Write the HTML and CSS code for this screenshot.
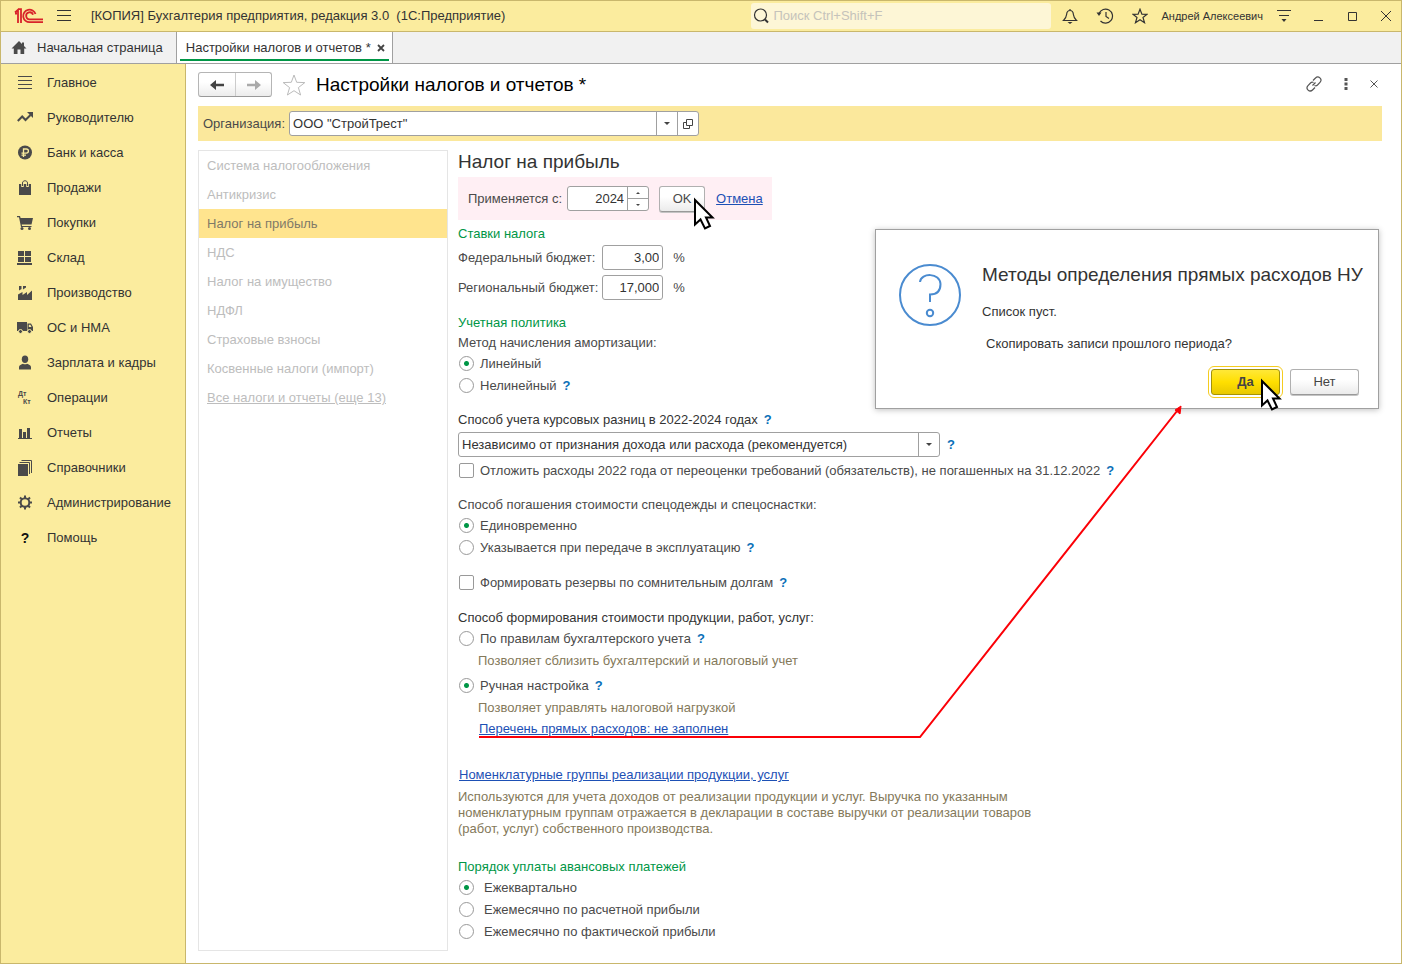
FILE: index.html
```html
<!DOCTYPE html>
<html lang="ru">
<head>
<meta charset="utf-8">
<title>Настройки налогов и отчетов</title>
<link rel="stylesheet" href="styles.css">
</head>
<body>
<div class="window">
  <header class="titlebar">
    <svg class="logo" width="30" height="16" viewBox="0 0 30 16" fill="none" stroke="#d8232a" stroke-width="1.800">
      <path d="M1 4.500 4 1.800V15M7 15V1.200H4.500M1 5.500h2"/>
      <path d="M21.500 6A6.300 6.300 0 1 0 16 14.200H29"/>
      <path d="M19 6.800A3.500 3.500 0 1 0 16 11.300H29"/>
    </svg>
    <button class="icon-btn menu-btn" aria-label="Меню"><svg width="14" height="12" viewBox="0 0 14 12" stroke="#333" fill="none"><path d="M0 .5h14M0 5.500h14M0 10.500h14"/></svg></button>
    <span class="app-title">[КОПИЯ] Бухгалтерия предприятия, редакция 3.0 &nbsp;(1С:Предприятие)</span>
    <label class="search">
      <svg width="16" height="16" viewBox="0 0 16 16" fill="none" stroke="#333"><circle cx="7.500" cy="7" r="6" stroke-width="1.200"/><path d="m12 11.500 3 3" stroke-width="2"/></svg>
      <input type="text" placeholder="Поиск Ctrl+Shift+F" aria-label="Поиск">
    </label>
    <div class="title-tools">
      <button class="icon-btn" aria-label="Уведомления"><svg width="16" height="16" viewBox="0 0 16 16" fill="none" stroke="#333" stroke-width="1.200"><path d="M1.500 12.500h13c-2-2-2.800-3-3.100-6C11.200 3.800 10 2.500 8 2.500S4.800 3.800 4.600 6.500c-.3 3-1.100 4-3.100 6zM8 2.500V1"/><path d="M5.500 14h5L8 16z" fill="#333" stroke="none"/></svg></button>
      <button class="icon-btn" aria-label="История"><svg width="18" height="16" viewBox="0 0 18 16" fill="none" stroke="#333" stroke-width="1.200"><path d="M3 5.500A7 7 0 1 1 4.500 13M10 4v4.500l3 2"/><path d="M.5 4.500h5L3 8z" fill="#333" stroke="none"/></svg></button>
      <button class="icon-btn" aria-label="Избранное"><svg width="16" height="16" viewBox="0 0 16 16" fill="none" stroke="#333" stroke-width="1.200"><path d="m8 1.200 1.900 4.900 5.200.2-4.100 3.200 1.500 5.200L8 11.700l-4.500 3L5 9.500.9 6.300l5.200-.2z"/></svg></button>
      <span class="user">Андрей Алексеевич</span>
      <button class="icon-btn" aria-label="Настройка"><svg width="16" height="14" viewBox="0 0 16 14" fill="none" stroke="#333"><path d="M1 1.500h14M3 6.500h10"/><path d="M5.500 10h5L8 13z" fill="#333" stroke="none"/></svg></button>
      <button class="icon-btn win" aria-label="Свернуть"><svg width="12" height="12" viewBox="0 0 12 12" stroke="#333"><path d="M2 10.500h9"/></svg></button>
      <button class="icon-btn win" aria-label="Развернуть"><svg width="12" height="12" viewBox="0 0 12 12" fill="none" stroke="#333"><path d="M2.500 2.500h8v8h-8z"/></svg></button>
      <button class="icon-btn win" aria-label="Закрыть"><svg width="12" height="12" viewBox="0 0 12 12" stroke="#333"><path d="m1 1 10 10M11 1 1 11"/></svg></button>
    </div>
  </header>

  <nav class="tabs">
    <a class="tab home" href="#"><svg width="16" height="14" viewBox="0 0 16 14" fill="#4a4a4a"><path d="M8 0 .5 7.500h2.300V13h3.700V8.500h3V13h3.700V7.500h2.300L13 5V1.500h-2V3z"/></svg>Начальная страница</a>
    <div class="tab active"><span>Настройки налогов и отчетов *</span><button class="icon-btn" aria-label="Закрыть вкладку"><svg width="8" height="8" viewBox="0 0 8 8" stroke="#444" stroke-width="1.800"><path d="m1 1 6 6M7 1 1 7"/></svg></button></div>
  </nav>

  <div class="workspace">
    <nav class="sidebar">
      <a href="#"><svg viewBox="0 0 16 16" stroke="#4a4a4a"><path d="M1 1.500h14M1 5.500h14M1 9.500h14M1 13.500h14"/></svg>Главное</a>
      <a href="#"><svg viewBox="0 0 16 16" fill="none" stroke="#4a4a4a" stroke-width="2"><path d="m.8 11 4.400-4.500 3.300 3.500L13.500 5"/><path d="M10 2h6v6z" fill="#4a4a4a" stroke="none"/></svg>Руководителю</a>
      <a href="#"><svg viewBox="0 0 16 16"><circle cx="8" cy="7.500" r="7" fill="#4a4a4a"/><path d="M6.500 12V4h2.800a2 2 0 0 1 0 4.200H4.500M4.500 10.200h4.500" fill="none" stroke="#faec9f" stroke-width="1.300"/></svg>Банк и касса</a>
      <a href="#"><svg viewBox="0 0 16 16"><path d="M2 4h12v11H2z" fill="#4a4a4a"/><path d="M5.500 7V3c0-3 5-3 5 0V7" fill="none" stroke="#faec9f" stroke-width="2.500"/><path d="M5.500 6V3c0-3 5-3 5 0V6" fill="none" stroke="#4a4a4a"/></svg>Продажи</a>
      <a href="#"><svg viewBox="0 0 16 16" fill="#4a4a4a"><path d="M0 1h3l.6 2H16l-1.500 6.500H4.700l.3 1.500h9.500v1H4L2 2.300H0z"/><circle cx="5" cy="13.500" r="1.500"/><circle cx="12.500" cy="13.500" r="1.500"/></svg>Покупки</a>
      <a href="#"><svg viewBox="0 0 16 16" fill="#4a4a4a"><path d="M1 1h6v5H1zM8 1h6v5H8zM1 7h6v5H1zM8 7h6v5H8zM0 13h15v2H0z"/></svg>Склад</a>
      <a href="#"><svg viewBox="0 0 16 16" fill="#4a4a4a"><path d="M1 15V9.500L5.500 7v3L10 7v3l5-4.500V15zM2 1h2.500v3L2 5.500zM6 1h3v1.500L6 4.500z"/></svg>Производство</a>
      <a href="#"><svg viewBox="0 0 16 16"><path d="M0 2h10v9H0zM10.500 3.500H14L16 7v4h-5.500z" fill="#4a4a4a"/><path d="M11.800 4.800h1.600L14.500 7h-2.700z" fill="#faec9f"/><g fill="#4a4a4a" stroke="#faec9f"><circle cx="3.500" cy="11.500" r="2"/><circle cx="12.500" cy="11.500" r="2"/></g></svg>ОС и НМА</a>
      <a href="#"><svg viewBox="0 0 16 16" fill="#4a4a4a"><ellipse cx="8" cy="4.200" rx="3.200" ry="3.700"/><path d="M2 14.500V12C2 10 4.500 9.500 6 8.700c1 .8 3 .8 4 0 1.500.8 4 1.300 4 3.300v2.500z"/></svg>Зарплата и кадры</a>
      <a href="#"><svg viewBox="0 0 16 16" class="dtkt"><text x="1" y="6">Дт</text><text x="6" y="14">Кт</text></svg>Операции</a>
      <a href="#"><svg viewBox="0 0 16 16" fill="#4a4a4a"><path d="M1 13h14v1H1zM2 4h3v9H2zM6 7h3v6H6zM10 3h3v10h-3z"/></svg>Отчеты</a>
      <a href="#"><svg viewBox="0 0 16 16" fill="none" stroke="#4a4a4a"><path d="M1 4h10v12H1z" fill="#4a4a4a" stroke="none"/><path d="M2.500 2.500h10V14M4.500.5h10V13"/></svg>Справочники</a>
      <a href="#"><svg viewBox="0 0 16 16" fill="none" stroke="#4a4a4a"><circle cx="8" cy="7.500" r="4.300" stroke-width="2"/><path d="M8 .5V3M8 12v2.500M1 7.500h2.500M12.500 7.500H15M3 2.500l2 2M11 10.500l2 2M13 2.500l-2 2M5 10.500l-2 2" stroke-width="2"/></svg>Администрирование</a>
      <a href="#"><b class="q">?</b>Помощь</a>
    </nav>

    <main class="page">
      <div class="page-head">
        <div class="history"><button aria-label="Назад"><svg width="14" height="12" viewBox="0 0 14 12" fill="#444"><path d="M0 6l6-5v3.700h8v2.600H6V11z"/></svg></button><button aria-label="Вперед"><svg width="14" height="12" viewBox="0 0 14 12" fill="#aaa"><path d="M14 6 8 1v3.700H0v2.600h8V11z"/></svg></button></div>
        <button class="icon-btn" aria-label="В избранное"><svg width="24" height="22" viewBox="0 0 24 22" fill="none" stroke="#bbb"><path d="m12 1 2.700 7.300 8.100.3-6.400 5 2.200 7.400-6.600-4.300L5.400 21l2.200-7.400-6.400-5 8.100-.3z"/></svg></button>
        <h1>Настройки налогов и отчетов *</h1>
        <div class="page-tools">
          <button class="icon-btn" aria-label="Ссылка"><svg width="16" height="16" viewBox="0 0 16 16" fill="none" stroke="#555" stroke-width="1.200"><path d="M7 4.500 9.500 2a3 3 0 0 1 4.500 4.300L11.500 9a2.800 2.800 0 0 1-3 .5M9 11.500 6.500 14A3 3 0 0 1 2 9.700L4.500 7a2.800 2.800 0 0 1 3-.5M6.500 9.500l3-3"/></svg></button>
          <button class="icon-btn" aria-label="Еще"><svg width="4" height="12" viewBox="0 0 4 12" fill="#555"><path d="M.5 0h3v3h-3zM.5 4.500h3v3h-3zM.5 9h3v3h-3z"/></svg></button>
          <button class="icon-btn" aria-label="Закрыть"><svg width="8" height="8" viewBox="0 0 8 8" stroke="#555"><path d="m.5.5 7 7M7.500.5l-7 7"/></svg></button>
        </div>
      </div>

      <div class="org-bar">
        <label for="org">Организация:</label>
        <div class="field org-field"><input id="org" type="text" value='ООО "СтройТрест"'><button aria-label="Выбрать"><i class="caret"></i></button><button aria-label="Открыть"><svg width="10" height="10" viewBox="0 0 10 10" fill="none" stroke="#444"><path d="M3.500.5h6v6h-6zM3.500 3.500h-3v6h6v-3"/></svg></button></div>
      </div>

      <div class="columns">
        <nav class="sections">
          <a href="#">Система налогообложения</a>
          <a href="#">Антикризис</a>
          <a href="#" class="current">Налог на прибыль</a>
          <a href="#">НДС</a>
          <a href="#">Налог на имущество</a>
          <a href="#">НДФЛ</a>
          <a href="#">Страховые взносы</a>
          <a href="#">Косвенные налоги (импорт)</a>
          <a href="#" class="all">Все налоги и отчеты (еще 13)</a>
        </nav>

        <form class="form">
          <h2>Налог на прибыль</h2>
          <div class="period">
            <label for="year">Применяется с:</label>
            <div class="field year-field"><input id="year" type="text" value="2024"><div class="spin"><button type="button" aria-label="Больше"><i class="caret up"></i></button><button type="button" aria-label="Меньше"><i class="caret small"></i></button></div></div>
            <button type="button" class="btn ok">OK</button>
            <a class="link" href="#">Отмена</a>
          </div>

          <h3 class="rates-title">Ставки налога</h3>
          <div class="rates">
            <label for="fed">Федеральный бюджет:</label><input class="field" id="fed" type="text" value="3,00"><span>%</span>
            <label for="reg">Региональный бюджет:</label><input class="field" id="reg" type="text" value="17,000"><span>%</span>
          </div>

          <h3 class="gap">Учетная политика</h3>
          <fieldset>
            <legend>Метод начисления амортизации:</legend>
            <div class="row"><label><input type="radio" name="amort" checked>Линейный</label></div>
            <div class="row"><label><input type="radio" name="amort">Нелинейный</label><button type="button" class="help">?</button></div>
          </fieldset>

          <div class="caption gap dark"><label for="diff">Способ учета курсовых разниц в 2022-2024 годах</label><button type="button" class="help">?</button></div>
          <div class="select-row">
            <div class="field select"><select id="diff"><option>Независимо от признания дохода или расхода (рекомендуется)</option></select><span class="drop"><i class="caret"></i></span></div>
            <button type="button" class="help">?</button>
          </div>
          <div class="row"><label><input type="checkbox">Отложить расходы 2022 года от переоценки требований (обязательств), не погашенных на 31.12.2022</label><button type="button" class="help">?</button></div>

          <fieldset class="gap">
            <legend>Способ погашения стоимости спецодежды и спецоснастки:</legend>
            <div class="row"><label><input type="radio" name="wear" checked>Единовременно</label></div>
            <div class="row"><label><input type="radio" name="wear">Указывается при передаче в эксплуатацию</label><button type="button" class="help">?</button></div>
          </fieldset>

          <div class="row gap"><label><input type="checkbox">Формировать резервы по сомнительным долгам</label><button type="button" class="help">?</button></div>

          <fieldset class="cost">
            <legend class="dark">Способ формирования стоимости продукции, работ, услуг:</legend>
            <div class="row"><label><input type="radio" name="cost">По правилам бухгалтерского учета</label><button type="button" class="help">?</button></div>
            <p class="hint">Позволяет сблизить бухгалтерский и налоговый учет</p>
            <div class="row manual"><label><input type="radio" name="cost" checked>Ручная настройка</label><button type="button" class="help">?</button></div>
            <p class="hint">Позволяет управлять налоговой нагрузкой</p>
            <a class="link costs" href="#">Перечень прямых расходов: не заполнен</a>
          </fieldset>

          <a class="link groups" href="#">Номенклатурные группы реализации продукции, услуг</a>
          <p class="note">Используются для учета доходов от реализации продукции и услуг. Выручка по указанным номенклатурным группам отражается в декларации в составе выручки от реализации товаров (работ, услуг) собственного производства.</p>

          <h3 class="advance">Порядок уплаты авансовых платежей</h3>
          <div class="advances">
            <div class="row"><label><input type="radio" name="adv" checked>Ежеквартально</label></div>
            <div class="row"><label><input type="radio" name="adv">Ежемесячно по расчетной прибыли</label></div>
            <div class="row"><label><input type="radio" name="adv">Ежемесячно по фактической прибыли</label></div>
          </div>
        </form>
      </div>
    </main>
  </div>

  <div class="dialog" role="dialog" aria-labelledby="dlg">
    <svg class="question" width="62" height="62" viewBox="0 0 62 62" fill="none" stroke="#4a8bd0" stroke-width="2"><circle cx="31" cy="31" r="30"/><path d="M21 18c1-9.500 20-9.500 20.500 2 0 7-4 10.500-10.500 10.500V38"/><circle cx="31" cy="49" r="3.200"/></svg>
    <div class="dialog-body">
      <h2 id="dlg">Методы определения прямых расходов НУ</h2>
      <p>Список пуст.</p>
      <p class="ask">Скопировать записи прошлого периода?</p>
      <div class="actions"><button class="btn yes">Да</button><button class="btn">Нет</button></div>
    </div>
  </div>

  <svg class="pointer-line" width="710" height="340" viewBox="0 0 710 340" fill="none" stroke="#fb0007" stroke-width="2"><path d="M5 336h441L703 10"/><path d="M707 5l-1 8-5-4z" fill="#fb0007" stroke-width="1"/></svg>
  <svg class="cursor cursor-ok" width="22" height="34" viewBox="0 0 22 34"><path d="M2 3v24.500l5.500-5 4.500 9 5-2.500-4-8.500h6.500z" fill="#fff" stroke="#000" stroke-width="2"/></svg>
  <svg class="cursor cursor-yes" width="22" height="34" viewBox="0 0 22 34"><path d="M2 3v24.500l5.500-5 4.500 9 5-2.500-4-8.500h6.500z" fill="#fff" stroke="#000" stroke-width="2"/></svg>
</div>
</body>
</html>
```
FILE: styles.css
```css
* { box-sizing: border-box; }
body {
  margin: 0;
  font: 13px/20px "Liberation Sans", Arial, sans-serif;
  color: #4a4a4a;
  background: #fff;
}
h1, h2, h3, p, fieldset, legend { margin: 0; padding: 0; border: 0; font-weight: normal; }
fieldset { min-width: 0; }
button, input, select { font: inherit; color: inherit; margin: 0; }
button { cursor: pointer; }
a { color: inherit; text-decoration: none; }

.window {
  position: relative;
  display: flex;
  flex-direction: column;
  min-height: 100vh;
  border: 1px solid #c9b76c;
}
.icon-btn {
  display: flex;
  align-items: center;
  justify-content: center;
  padding: 0;
  border: 0;
  background: none;
}

.titlebar {
  display: flex;
  align-items: center;
  height: 31px;
  padding: 0 7px 0 13px;
  background: #fbec9e;
  border-bottom: 1px solid #c9b76c;
}
.menu-btn { margin: 0 20px 0 13px; }
.app-title { flex: 1; color: #333; }
.search {
  display: flex;
  align-items: center;
  gap: 4px;
  width: 300px;
  height: 26px;
  padding: 0 2px;
  border-radius: 3px;
  background: #fdf6d6;
}
.search input { flex: 1; min-width: 0; padding: 0; border: 0; outline: 0; background: none; }
.search input::placeholder { color: #c5c3bb; opacity: 1; }
.title-tools { display: flex; align-items: center; gap: 18px; margin-left: 11px; }
.user { font-size: 11px; color: #333; margin: 0 -5px; }
.win { width: 16px; }

.tabs { display: flex; height: 32px; background: #f1f1f1; border-bottom: 1px solid #a0a0a0; color: #333; }
.tab { display: flex; align-items: center; }
.home { gap: 10px; padding: 0 13px 0 10px; }
.active {
  position: relative;
  gap: 6px;
  padding: 0 7px 0 9px;
  background: #fff;
  border: solid #a0a0a0;
  border-width: 0 1px;
}
.active::after { content: ""; position: absolute; left: 3px; right: 3px; bottom: 2px; height: 2px; background: #009646; }

.workspace { flex: 1; display: flex; }
.sidebar { width: 185px; flex: none; background: #fbec9e; border-right: 1px solid #c9b76c; color: #333; }
.sidebar a { display: flex; align-items: center; gap: 14px; height: 35px; padding-left: 16px; }
.sidebar a:first-child { margin-top: 1px; }
.sidebar svg { width: 16px; height: 16px; }
.dtkt text { font: bold 7px "Liberation Sans", Arial, sans-serif; fill: #4a4a4a; }
.q { width: 16px; text-align: center; font-size: 14px; color: #111; }

.page { flex: 1; min-width: 0; display: flex; flex-direction: column; padding: 8px 19px 12px 12px; }
.page-head { display: flex; align-items: center; height: 25px; margin-bottom: 9px; }
.history { display: flex; height: 25px; border: 1px solid #b5b5b5; border-bottom-color: #999; border-radius: 3px; background: linear-gradient(#fff 40%, #ececec); }
.history button { width: 36px; padding: 0; border: 0; background: none; display: flex; align-items: center; justify-content: center; }
.history button + button { border-left: 1px solid #ccc; }
.page-head > .icon-btn { margin: 0 10px; }
h1 { flex: 1; font-size: 19px; line-height: 24px; color: #000; }
.page-tools { display: flex; align-items: center; gap: 22px; margin: 0 4px 2px 0; }

.org-bar { display: flex; align-items: center; gap: 4px; height: 35px; padding-left: 5px; background: #fbe89c; }
.field { display: flex; height: 25px; border: 1px solid #a0a0a0; border-radius: 3px; background: #fff; color: #333; overflow: hidden; }
.field input, .field select { min-width: 0; padding: 0 3px; border: 0; outline: 0; background: none; }
.field button { padding: 0; border: 0; background: none; }
.org-field { width: 410px; }
.org-field input { flex: 1; }
.org-field button { width: 21px; border-left: 1px solid #a0a0a0; display: flex; align-items: center; justify-content: center; }
.caret { border: solid transparent; border-width: 3px 3px 0; border-top-color: #444; }
.caret.small { border-width: 2px 2px 0; }
.caret.up { border-width: 0 2px 2px; border-color: transparent transparent #444; }

.columns { flex: 1; display: flex; gap: 10px; margin-top: 9px; }
.sections { width: 250px; flex: none; border: 1px solid #e5e5e5; color: #bdbdbd; }
.sections a { display: block; height: 29px; padding-left: 8px; line-height: 29px; }
.sections .current { background: #ffe48e; color: #7f7a68; }
.sections .all { text-decoration: underline; }

.form { flex: 1; min-width: 0; }
h2 { font-size: 19px; line-height: 24px; color: #333; }
.period { display: flex; align-items: center; width: max-content; height: 43px; margin-top: 3px; padding: 0 9px 0 10px; background: #ffeff4; }
.year-field { width: 82px; margin: 0 10px 0 5px; }
.year-field input { flex: 1; text-align: right; }
.spin { display: flex; flex-direction: column; width: 21px; border-left: 1px solid #a0a0a0; }
.spin button { flex: 1; display: flex; align-items: center; justify-content: center; }
.spin button + button { border-top: 1px solid #a0a0a0; }
.btn { padding: 0; border: 1px solid #b0b0b0; border-bottom-color: #999; border-radius: 3px; background: linear-gradient(#fff 40%, #ebebeb); box-shadow: 0 1px #c4c4c4; }
.ok { width: 46px; height: 26px; margin-right: 11px; }
.link { color: #1d50b5; text-decoration: underline; }

h3 { font-size: 13px; line-height: 20px; color: #009646; }
.rates-title { margin-top: 4px; }
.rates { display: grid; grid-template-columns: repeat(3, max-content); align-items: center; gap: 5px 0; margin-top: 1px; }
.rates .field { width: 61px; margin: 0 10px 0 4px; padding: 0 3px; text-align: right; outline: 0; }
.gap { margin-top: 13px; }
.cost { margin-top: 14px; }
.caption, .row { display: flex; align-items: center; gap: 6px; }
.row { height: 22px; }
.row label { display: flex; align-items: center; gap: 5px; }
.dark { color: #333; }
.help { padding: 0; border: 0; background: none; line-height: 20px; color: #0b70b8; font-weight: bold; }

input[type="radio"], input[type="checkbox"] { appearance: none; flex: none; width: 15px; height: 15px; margin: 0 1px 2px; border: 1px solid #999; border-radius: 2px; background: #fff; }
input[type="radio"] { border-radius: 50%; }
input[type="radio"]:checked { background: radial-gradient(circle, #009646 2px, #fff 3px); }

.select-row { display: flex; align-items: center; gap: 7px; margin: 2px 0 3px; }
.select { display: grid; grid-template-columns: 1fr 21px; width: 482px; }
.select select { grid-area: 1 / 1 / 2 / 3; appearance: none; }
.drop { grid-area: 1 / 2; display: flex; align-items: center; justify-content: center; border-left: 1px solid #a0a0a0; pointer-events: none; }

.hint { padding-left: 20px; line-height: 22px; color: #84795a; }
.manual { margin-top: 3px; }
.costs { display: block; width: max-content; margin-left: 21px; }
.groups { display: block; width: max-content; margin: 26px 0 4px 1px; }
.note { max-width: 580px; line-height: 16px; color: #84795a; }
.advance { margin-top: 20px; }
.advances label { gap: 9px; }

.dialog {
  position: absolute;
  top: 228px;
  right: 22px;
  display: flex;
  gap: 21px;
  width: 504px;
  height: 180px;
  padding: 33px 19px 0 23px;
  border: 1px solid #a0a0a0;
  background: #fff;
  box-shadow: 0 1px 6px rgba(0, 0, 0, .25);
  color: #333;
}
.question { flex: none; margin-top: 1px; }
.dialog-body { flex: 1; min-width: 0; white-space: nowrap; }
.dialog-body p { margin-top: 15px; }
.dialog-body .ask { margin-top: 12px; padding-left: 4px; }
.actions { display: flex; justify-content: flex-end; gap: 10px; margin-top: 15px; }
.dialog .btn { width: 69px; height: 26px; color: #444; }
.dialog .yes { border-color: #a39208; background: linear-gradient(#ffe838, #ffdf00 50%, #e8c800); box-shadow: none; outline: 1px solid #f5cc20; outline-offset: 2px; font-weight: bold; }

.pointer-line { position: absolute; left: 473px; top: 400px; pointer-events: none; }
.cursor { position: absolute; pointer-events: none; }
.cursor-ok { left: 692px; top: 196px; }
.cursor-yes { left: 1259px; top: 377px; }
```
